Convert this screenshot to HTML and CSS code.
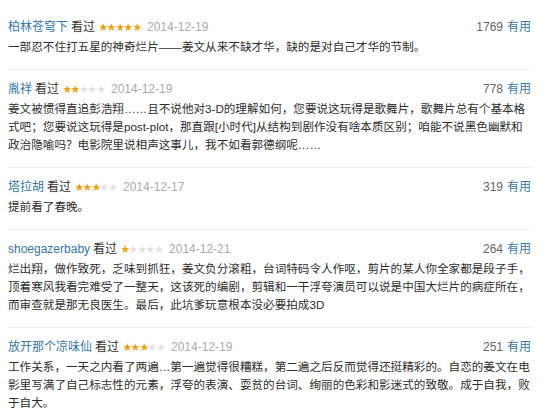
FILE: index.html
```html
<!DOCTYPE html>
<html lang="zh-CN">
<head>
<meta charset="utf-8">
<title>短评</title>
<link rel="stylesheet" href="styles.css">
</head>
<body>
<svg width="0" height="0" class="defs">
  <defs>
    <symbol id="star" viewBox="0 0 10 10">
      <polygon points="5,0.2 6.3,3.5 9.8,3.6 7,5.8 8,9.5 5,7.4 2,9.5 3,5.8 0.2,3.6 3.7,3.5"/>
    </symbol>
  </defs>
</svg>
<div class="comments">
  <div class="item">
    <div class="head">
      <div class="info">
        <a class="name">柏林苍穹下</a><span class="seen">看过</span>
        <span class="stars"><svg class="on"><use href="#star"/></svg><svg class="on"><use href="#star"/></svg><svg class="on"><use href="#star"/></svg><svg class="on"><use href="#star"/></svg><svg class="on"><use href="#star"/></svg></span>
        <span class="date">2014-12-19</span>
      </div>
      <div class="votes"><span class="count">1769</span><a class="useful">有用</a></div>
    </div>
    <p class="text">一部忍不住打五星的神奇烂片——姜文从来不缺才华，缺的是对自己才华的节制。</p>
  </div>
  <div class="item">
    <div class="head">
      <div class="info">
        <a class="name">胤祥</a><span class="seen">看过</span>
        <span class="stars"><svg class="on"><use href="#star"/></svg><svg class="on"><use href="#star"/></svg><svg><use href="#star"/></svg><svg><use href="#star"/></svg><svg><use href="#star"/></svg></span>
        <span class="date">2014-12-19</span>
      </div>
      <div class="votes"><span class="count">778</span><a class="useful">有用</a></div>
    </div>
    <p class="text">姜文被惯得直追彭浩翔……且不说他对3-D的理解如何，您要说这玩得是歌舞片，歌舞片总有个基本格式吧；您要说这玩得是post-plot，那直跟[小时代]从结构到剧作没有啥本质区别；咱能不说黑色幽默和政治隐喻吗？电影院里说相声这事儿，我不如看郭德纲呢……</p>
  </div>
  <div class="item">
    <div class="head">
      <div class="info">
        <a class="name">塔拉胡</a><span class="seen">看过</span>
        <span class="stars"><svg class="on"><use href="#star"/></svg><svg class="on"><use href="#star"/></svg><svg class="on"><use href="#star"/></svg><svg><use href="#star"/></svg><svg><use href="#star"/></svg></span>
        <span class="date">2014-12-17</span>
      </div>
      <div class="votes"><span class="count">319</span><a class="useful">有用</a></div>
    </div>
    <p class="text">提前看了春晚。</p>
  </div>
  <div class="item">
    <div class="head">
      <div class="info">
        <a class="name">shoegazerbaby</a><span class="seen">看过</span>
        <span class="stars"><svg class="on"><use href="#star"/></svg><svg><use href="#star"/></svg><svg><use href="#star"/></svg><svg><use href="#star"/></svg><svg><use href="#star"/></svg></span>
        <span class="date">2014-12-21</span>
      </div>
      <div class="votes"><span class="count">264</span><a class="useful">有用</a></div>
    </div>
    <p class="text">烂出翔，做作致死，乏味到抓狂，姜文负分滚粗，台词特码令人作呕，剪片的某人你全家都是段子手，顶着寒风我看完难受了一整天，这该死的编剧，剪辑和一干浮夸演员可以说是中国大烂片的病症所在，而审查就是那无良医生。最后，此坑爹玩意根本没必要拍成3D</p>
  </div>
  <div class="item">
    <div class="head">
      <div class="info">
        <a class="name">放开那个凉味仙</a><span class="seen">看过</span>
        <span class="stars"><svg class="on"><use href="#star"/></svg><svg class="on"><use href="#star"/></svg><svg class="on"><use href="#star"/></svg><svg><use href="#star"/></svg><svg><use href="#star"/></svg></span>
        <span class="date">2014-12-19</span>
      </div>
      <div class="votes"><span class="count">251</span><a class="useful">有用</a></div>
    </div>
    <p class="text">工作关系，一天之内看了两遍…第一遍觉得很糟糕，第二遍之后反而觉得还挺精彩的。自恋的姜文在电影里写满了自己标志性的元素，浮夸的表演、耍贫的台词、绚丽的色彩和影迷式的致敬。成于自我，败于自大。</p>
  </div>
</div>
</body>
</html>
```

FILE: styles.css
```css
html, body {
  margin: 0;
  padding: 0;
  background: #fff;
}

body {
  font-family: "Liberation Sans", "Noto Sans CJK SC", sans-serif;
  font-size: 11.6px;
  color: #333;
}

.defs {
  position: absolute;
  width: 0;
  height: 0;
}

.comments {
  width: 524px;
  padding: 8px 0 0 8px;
}

.item {
  padding: 9px 0 13px;
  border-bottom: 1px solid #f0f0f0;
}

.item:last-child {
  border-bottom: none;
}

.head {
  display: flex;
  justify-content: space-between;
  align-items: center;
  height: 20px;
  line-height: 20px;
  font-size: 12px;
}

.info {
  display: flex;
  align-items: center;
}

.name {
  color: #3377aa;
}

.seen {
  color: #333;
  margin-left: 3px;
}

.stars {
  display: inline-flex;
  margin-left: 4px;
  align-items: center;
}

.stars svg {
  width: 8.4px;
  height: 8.4px;
  fill: #e2e2e2;
}

.stars svg.on {
  fill: #f5a011;
}

.date {
  color: #aaa;
  margin-left: 6px;
}

.votes {
  padding-right: 1px;
}

.count {
  color: #666;
  margin-right: 4px;
}

.useful {
  color: #3377aa;
}

.text {
  margin: 1px 0 0;
  line-height: 18px;
  color: #2e2e2e;
  font-size: 11.6px;
}
```
